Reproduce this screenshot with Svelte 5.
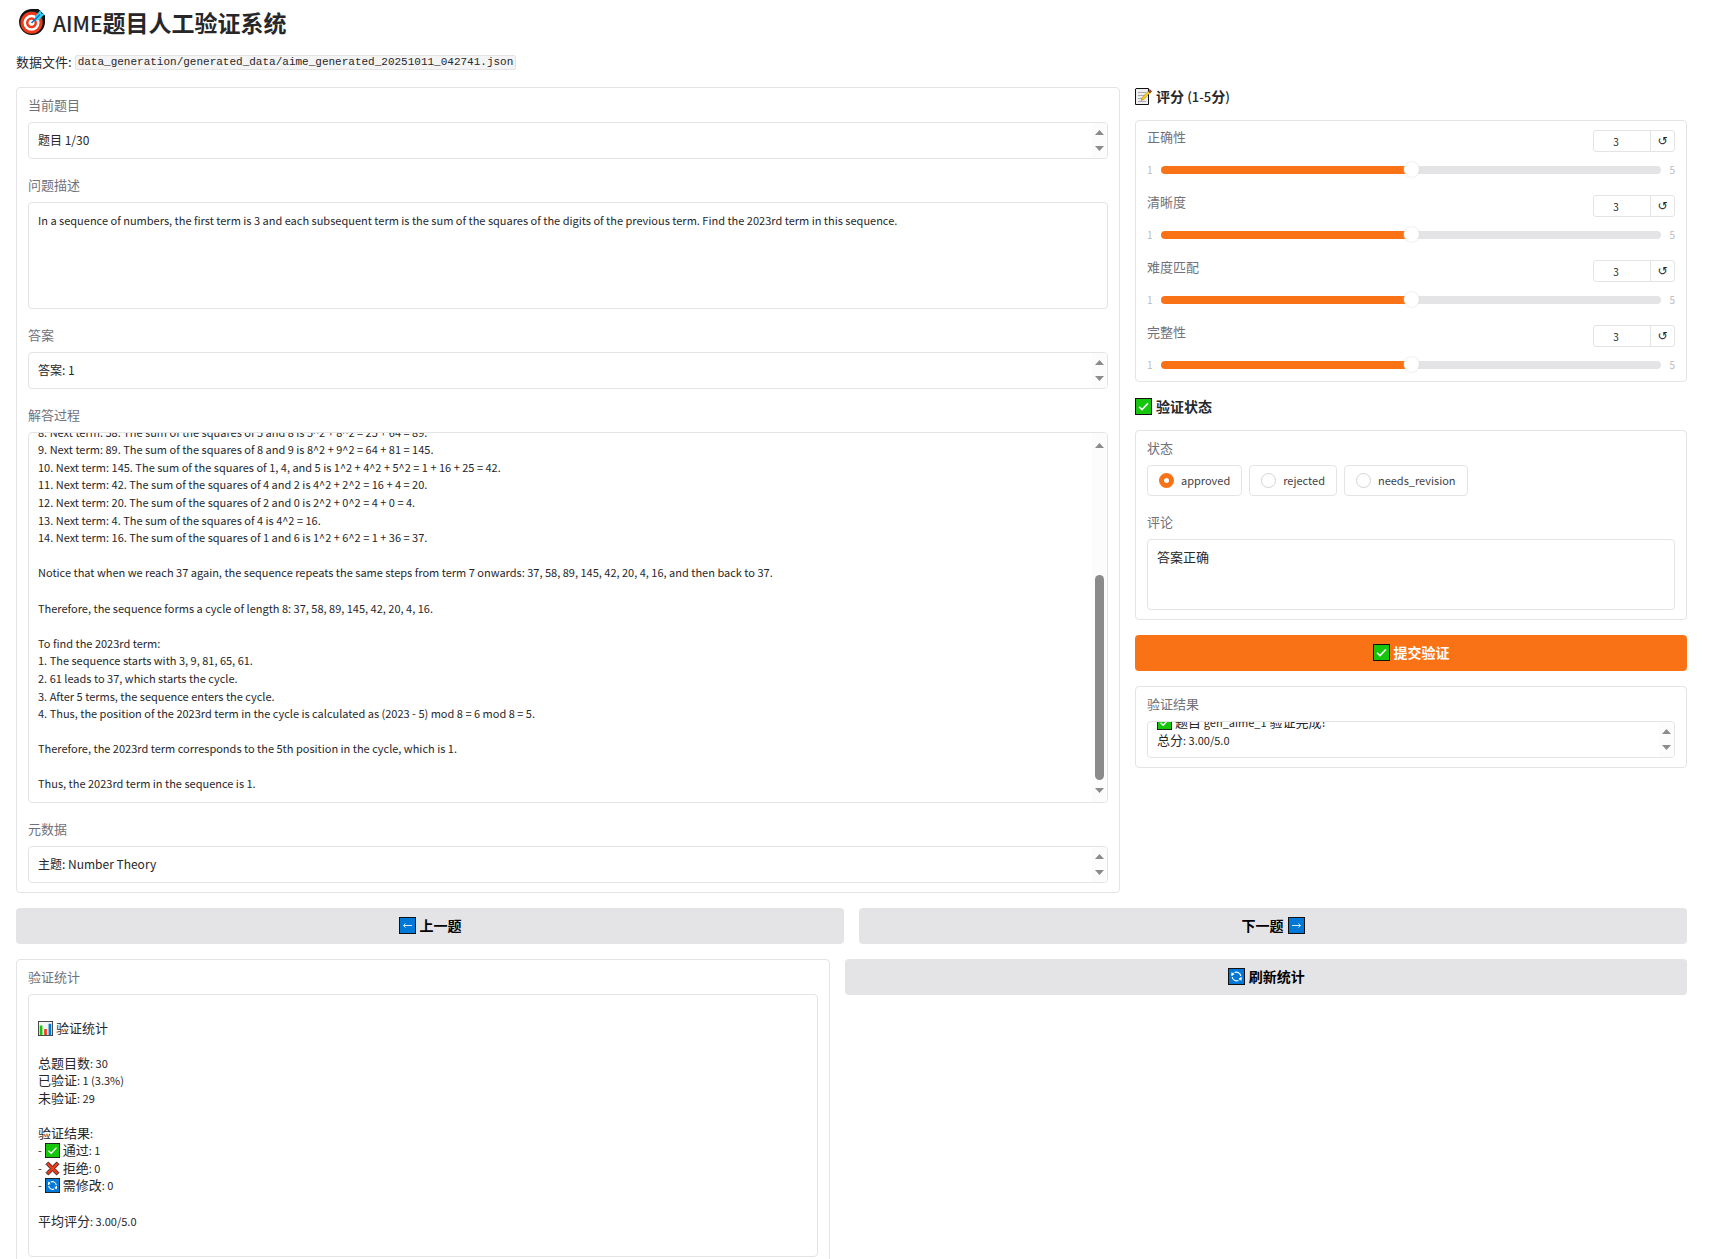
<script>
  let scores = $state([
    { id: 'correctness', label: '正确性', value: 3 },
    { id: 'clarity', label: '清晰度', value: 3 },
    { id: 'difficulty', label: '难度匹配', value: 3 },
    { id: 'completeness', label: '完整性', value: 3 }
  ]);
  const states = ['approved', 'rejected', 'needs_revision'];
  let status = $state('approved');
  let comment = $state('答案正确');

  const problem =
    'In a sequence of numbers, the first term is 3 and each subsequent term is the sum of the squares of the digits of the previous term. Find the 2023rd term in this sequence.';

  const solution = `7. Next term: 37. The sum of the squares of 3 and 7 is 3^2 + 7^2 = 9 + 49 = 58.
8. Next term: 58. The sum of the squares of 5 and 8 is 5^2 + 8^2 = 25 + 64 = 89.
9. Next term: 89. The sum of the squares of 8 and 9 is 8^2 + 9^2 = 64 + 81 = 145.
10. Next term: 145. The sum of the squares of 1, 4, and 5 is 1^2 + 4^2 + 5^2 = 1 + 16 + 25 = 42.
11. Next term: 42. The sum of the squares of 4 and 2 is 4^2 + 2^2 = 16 + 4 = 20.
12. Next term: 20. The sum of the squares of 2 and 0 is 2^2 + 0^2 = 4 + 0 = 4.
13. Next term: 4. The sum of the squares of 4 is 4^2 = 16.
14. Next term: 16. The sum of the squares of 1 and 6 is 1^2 + 6^2 = 1 + 36 = 37.

Notice that when we reach 37 again, the sequence repeats the same steps from term 7 onwards: 37, 58, 89, 145, 42, 20, 4, 16, and then back to 37.

Therefore, the sequence forms a cycle of length 8: 37, 58, 89, 145, 42, 20, 4, 16.

To find the 2023rd term:
1. The sequence starts with 3, 9, 81, 65, 61.
2. 61 leads to 37, which starts the cycle.
3. After 5 terms, the sequence enters the cycle.
4. Thus, the position of the 2023rd term in the cycle is calculated as (2023 - 5) mod 8 = 6 mod 8 = 5.

Therefore, the 2023rd term corresponds to the 5th position in the cycle, which is 1.

Thus, the 2023rd term in the sequence is 1.`;

  function toEnd(node) {
    node.scrollTop = node.scrollHeight;
  }
</script>

{#snippet icon(name)}
  <svg class="icon {name}" viewBox="0 0 17 17" aria-hidden="true">
    {#if name === 'check'}
      <rect x="0.5" y="0.5" width="16" height="16" fill="#16c60c" stroke="#111" />
      <path d="M4 8.8 7 11.6 13 5.2" fill="none" stroke="#fff" stroke-width="1.5" />
    {:else if name === 'left'}
      <rect x="0.5" y="0.5" width="16" height="16" fill="#0078d7" stroke="#111" />
      <path d="M13 8.5H4.5M6.5 6.5l-2 2 2 2" fill="none" stroke="#d4e9fa" />
    {:else if name === 'right'}
      <rect x="0.5" y="0.5" width="16" height="16" fill="#0078d7" stroke="#111" />
      <path d="M4 8.5h8.5M10.500 6.500l2 2-2 2" fill="none" stroke="#d4e9fa" />
    {:else if name === 'cycle'}
      <rect x="0.5" y="0.5" width="16" height="16" fill="#0078d7" stroke="#111" />
      <path d="M6.500 4.500A4.500 4.500 0 0 1 12.800 8M10.500 12.500A4.500 4.500 0 0 1 4.200 9" fill="none" stroke="#fff" stroke-width="1.200" />
      <path d="M4 8V6.500L5.500 5M13 9v1.500L11.500 12" fill="none" stroke="#fff" stroke-width="1.200" />
      <path d="M3.500 4v3H6.500zM13.500 13v-3H10.500z" fill="#fff" />
    {:else if name === 'cross'}
      <path d="M3.800 1.200 8.500 5.800 13.200 1.200 15.800 3.800 11.200 8.500 15.800 13.200 13.200 15.800 8.500 11.200 3.800 15.800 1.200 13.200 5.800 8.500 1.200 3.800z" fill="#f03a17" stroke="#222" stroke-width="1.100" />
    {:else if name === 'chart'}
      <rect x="0.5" y="0.5" width="16" height="16" fill="#f4f4f4" stroke="#333" />
      <path d="M2 5h3v11H2z" fill="#16c60c" />
      <path d="M7 9h3v7H7z" fill="#f03a17" />
      <path d="M12 3h3v13h-3z" fill="#0078d7" />
    {:else if name === 'memo'}
      <path d="M1 .5h12.500V16.500H.5V1z" fill="#eee" stroke="#111" />
      <path d="M3 4.500h8M3 7.500h7M3 10.500h4M3 13.500h8" stroke="#aaa" />
      <path d="M6 12.500 7 9.800 13.500 3l1.800 1.600-6.600 6.900z" fill="#fcd116" stroke="#8a6a10" stroke-width=".5" />
      <path d="M13.200 3.200 14.800 1.600 16.600 3.300 15.200 4.800z" fill="#e0412a" stroke="#222" stroke-width=".6" />
    {/if}
  </svg>
{/snippet}

{#snippet bar(long)}
  <span class="bar" class:long aria-hidden="true">
    <svg viewBox="0 0 9 5"><path d="M4.500 0 9 5H0z" /></svg>
    {#if long}<span class="thumb"></span>{/if}
    <svg viewBox="0 0 9 5"><path d="M4.500 5 9 0H0z" /></svg>
  </span>
{/snippet}

<main>
  <header>
    <h1>
      <svg class="target" viewBox="0 0 28 28" aria-hidden="true">
        <path d="M13 2H20L26 8V15A12 12 0 1 1 13 2z" fill="#222" stroke="#111" stroke-width="2" stroke-linejoin="round" />
        <circle cx="13.500" cy="14.800" r="11" fill="#f03a17" />
        <circle cx="13.500" cy="14.800" r="8" fill="#fff" />
        <circle cx="13.500" cy="14.800" r="5.500" fill="#f03a17" />
        <circle cx="13.500" cy="14.800" r="3" fill="#fff" />
        <path d="M17 8.500 22.500 2 23.200 5.500 26.500 6 20.500 12.500 17 12z" fill="#31d2f7" />
        <path d="M13.500 15 22 6.500" stroke="#0078d7" stroke-width="1.600" />
      </svg>
      <span><span class="latin">AIME</span>题目人工验证系统</span>
    </h1>
    <p><span>数据文件<span class="latin">:</span></span><code>data_generation/generated_data/aime_generated_20251011_042741.json</code></p>
  </header>

  <div class="columns">
    <section class="card">
      <div class="block">
        <label for="current">当前题目</label>
        <div class="field one"><textarea id="current" rows="1" readonly>题目 1/30</textarea>{@render bar(false)}</div>
      </div>
      <div class="block">
        <label for="problem">问题描述</label>
        <div class="field problem"><textarea id="problem" class="en" readonly value={problem}></textarea></div>
      </div>
      <div class="block">
        <label for="answer">答案</label>
        <div class="field one"><textarea id="answer" rows="1" readonly>答案: 1</textarea>{@render bar(false)}</div>
      </div>
      <div class="block">
        <label for="solution">解答过程</label>
        <div class="field solution"><textarea id="solution" class="en" readonly value={solution} use:toEnd></textarea>{@render bar(true)}</div>
      </div>
      <div class="block">
        <label for="meta">元数据</label>
        <div class="field one"><textarea id="meta" rows="1" readonly>主题: Number Theory</textarea>{@render bar(false)}</div>
      </div>
    </section>

    <div class="side">
      <h2>{@render icon('memo')}<span>评分 <span class="latin">(1-5</span>分<span class="latin">)</span></span></h2>
      <section class="card">
        {#each scores as s (s.id)}
          <div class="score">
            <div class="head">
              <label for={s.id}>{s.label}</label>
              <div class="number">
                <input type="number" min="1" max="5" aria-label="{s.label} 数值" bind:value={s.value} />
                <button type="button" aria-label="重置 {s.label}" onclick={() => (s.value = 3)}>↺</button>
              </div>
            </div>
            <div class="slide">
              <span>1</span>
              <input id={s.id} type="range" min="1" max="5" bind:value={s.value} style="--fill: {(s.value - 1) * 25}%" />
              <span>5</span>
            </div>
          </div>
        {/each}
      </section>

      <h2>{@render icon('check')}<span>验证状态</span></h2>
      <section class="card">
        <div class="block" role="radiogroup" aria-labelledby="status-label">
          <span class="label" id="status-label">状态</span>
          <div class="options">
            {#each states as st}
              <label><input type="radio" name="status" value={st} bind:group={status} />{st}</label>
            {/each}
          </div>
        </div>
        <div class="block">
          <label for="comment">评论</label>
          <div class="field comment"><textarea id="comment" class="zh" bind:value={comment}></textarea></div>
        </div>
      </section>

      <button type="button" class="action primary">{@render icon('check')}提交验证</button>

      <section class="card">
        <div class="block">
          <span class="label" id="result-label">验证结果</span>
          <div class="field one">
            <output aria-labelledby="result-label" use:toEnd>
              <div>{@render icon('check')} 题目 <span class="latin">gen_aime_1</span> 验证完成!</div>
              <div>总分<span class="latin">: 3.00/5.0</span></div>
            </output>
            {@render bar(false)}
          </div>
        </div>
      </section>
    </div>
  </div>

  <nav>
    <button type="button" class="action">{@render icon('left')}上一题</button>
    <button type="button" class="action">下一题{@render icon('right')}</button>
  </nav>

  <div class="stats">
    <section class="card">
      <div class="block">
        <span class="label" id="stats-label">验证统计</span>
        <div class="field summary">
          <output aria-labelledby="stats-label">
            <br />
            <div>{@render icon('chart')} 验证统计</div>
            <br />
            <div>总题目数<span class="latin">: 30</span></div>
            <div>已验证<span class="latin">: 1 (3.3%)</span></div>
            <div>未验证<span class="latin">: 29</span></div>
            <br />
            <div>验证结果<span class="latin">:</span></div>
            <div><span class="latin">-</span> {@render icon('check')} 通过<span class="latin">: 1</span></div>
            <div><span class="latin">-</span> {@render icon('cross')} 拒绝<span class="latin">: 0</span></div>
            <div><span class="latin">-</span> {@render icon('cycle')} 需修改<span class="latin">: 0</span></div>
            <br />
            <div>平均评分<span class="latin">: 3.00/5.0</span></div>
          </output>
        </div>
      </div>
    </section>
    <button type="button" class="action">{@render icon('cycle')}刷新统计</button>
  </div>
</main>

<style>
  :global(body) {
    margin: 0;
    background: #fff;
  }
  main {
    box-sizing: border-box;
    display: flex;
    flex-direction: column;
    gap: 15px;
    padding: 7px 25px 0 16px;
    font-family: 'Noto Sans CJK SC', sans-serif;
    font-size: 13px;
    color: #27272a;
  }
  main :global(*) {
    box-sizing: border-box;
  }
  textarea, input, button, output {
    font-family: inherit;
    color: inherit;
    margin: 0;
  }
  h1, h2, p {
    margin: 0;
  }
  h1 {
    display: flex;
    align-items: center;
    gap: 7px;
    padding-left: 2px;
    font-size: 23px;
    line-height: 30px;
    font-weight: 700;
  }
  h1 .latin {
    font-size: 21px;
    font-weight: 500;
  }
  .target {
    width: 28px;
    height: 28px;
  }
  header p {
    display: flex;
    align-items: center;
    gap: 3px;
    margin-top: 15px;
    line-height: 20px;
  }
  header .latin {
    line-height: 1;
  }
  code {
    padding: 0 2px;
    border: 1px solid #e4e4e7;
    border-radius: 2px;
    background: #f4f4f5;
    font: 11px/13px 'Liberation Mono', monospace;
  }
  .columns {
    display: grid;
    grid-template-columns: 2fr 1fr;
    align-items: start;
    gap: 15px;
  }
  .side {
    display: flex;
    flex-direction: column;
    gap: 15px;
  }
  .card {
    min-width: 0;
    border: 1px solid #e4e4e7;
    border-radius: 4px;
  }
  .block {
    padding: 7px 11px 9px;
  }
  .block > label, .label {
    display: block;
    margin-bottom: 8px;
    line-height: 19px;
    color: #71717a;
  }
  .field {
    display: flex;
    overflow: hidden;
    border: 1px solid #e4e4e7;
    border-radius: 4px;
  }
  textarea {
    flex: 1;
    min-width: 0;
    padding: 8px 9px;
    border: 0;
    outline: 0;
    resize: none;
    overflow: hidden;
    background: transparent;
    font-size: 12px;
    line-height: 18px;
  }
  textarea.en {
    padding: 9px;
    font-size: 11px;
    line-height: 1.6;
  }
  textarea.zh {
    font-size: 13px;
  }
  .one {
    height: 37px;
  }
  .problem {
    height: 107px;
  }
  .solution {
    height: 371px;
  }
  .comment {
    height: 71px;
  }
  .bar {
    display: flex;
    flex-direction: column;
    align-items: center;
    justify-content: space-between;
    width: 15px;
    padding: 7px 0;
    background: #fcfcfc;
  }
  .bar.long {
    padding: 10px 0 9px;
  }
  .bar svg {
    width: 9px;
    height: 5px;
    fill: #8b8b8b;
  }
  .thumb {
    width: 9px;
    height: 205px;
    margin: auto 0 8px;
    border-radius: 5px;
    background: #8b8b8b;
  }
  h2 {
    display: flex;
    align-items: center;
    gap: 4px;
    height: 18px;
    font-size: 14px;
    line-height: 18px;
    font-weight: 700;
  }
  h2 .latin {
    font-size: 13px;
    font-weight: 500;
  }
  .icon {
    flex: none;
    width: 17px;
    height: 17px;
  }
  .score {
    padding: 9px 11px;
  }
  .head {
    display: flex;
    justify-content: space-between;
    align-items: flex-start;
  }
  .head label {
    line-height: 14px;
    color: #71717a;
  }
  .number {
    display: flex;
    height: 22px;
    border: 1px solid #e4e4e7;
    border-radius: 3px;
  }
  .number input {
    width: 56px;
    padding: 0 12px 0 0;
    border: 0;
    outline: 0;
    background: transparent;
    text-align: center;
    font-size: 10px;
    appearance: textfield;
  }
  .number input::-webkit-inner-spin-button {
    appearance: none;
    margin: 0;
  }
  .number button {
    width: 24px;
    padding: 0;
    border: 0;
    border-left: 1px solid #e4e4e7;
    background: transparent;
    font: 12px/20px 'DejaVu Sans', sans-serif;
  }
  .slide {
    display: flex;
    align-items: center;
    gap: 8px;
    height: 15px;
    margin-top: 10px;
    font-size: 10px;
    color: #bbbbc1;
  }
  .slide input {
    flex: 1;
    min-width: 0;
    height: 8px;
    appearance: none;
    border-radius: 4px;
    background: linear-gradient(to right, #f97316 var(--fill), #e4e4e7 var(--fill));
  }
  .slide input::-webkit-slider-thumb {
    appearance: none;
    width: 15px;
    height: 15px;
    border-radius: 50%;
    background: #fff;
    box-shadow: 0 0 2px #d4d4d8;
  }
  .options {
    display: flex;
    flex-wrap: wrap;
    gap: 7px;
  }
  .options label {
    display: flex;
    align-items: center;
    gap: 7px;
    height: 31px;
    padding: 0 11px;
    border: 1px solid #e4e4e7;
    border-radius: 4px;
    font-size: 11px;
    line-height: 1;
    color: #3f3f46;
  }
  .options input {
    width: 15px;
    height: 15px;
    appearance: none;
    border: 1px solid #d4d4d8;
    border-radius: 50%;
    background: #fff;
  }
  .options input:checked {
    border: 5px solid #f97316;
  }
  .action {
    display: flex;
    align-items: center;
    justify-content: center;
    gap: 4px;
    height: 36px;
    padding: 0 0 2px;
    border: 0;
    border-radius: 4px;
    background: #e4e4e7;
    color: #000;
    font-size: 14px;
    font-weight: 700;
  }
  .primary {
    background: #f97316;
    color: #fff;
  }
  output {
    display: block;
    flex: 1;
    min-width: 0;
    padding: 9px;
    overflow: hidden;
    font-size: 13px;
    line-height: 1.35;
  }
  output .latin {
    font-size: 11px;
    line-height: 1;
  }
  output :global(.icon) {
    width: 15px;
    height: 15px;
    vertical-align: -3px;
  }
  nav {
    display: grid;
    grid-template-columns: 1fr 1fr;
    gap: 15px;
  }
  .stats {
    display: grid;
    grid-template-columns: 30fr 31fr;
    align-items: start;
    gap: 15px;
  }
  .summary output {
    padding: 6px 9px 27px;
  }
</style>
